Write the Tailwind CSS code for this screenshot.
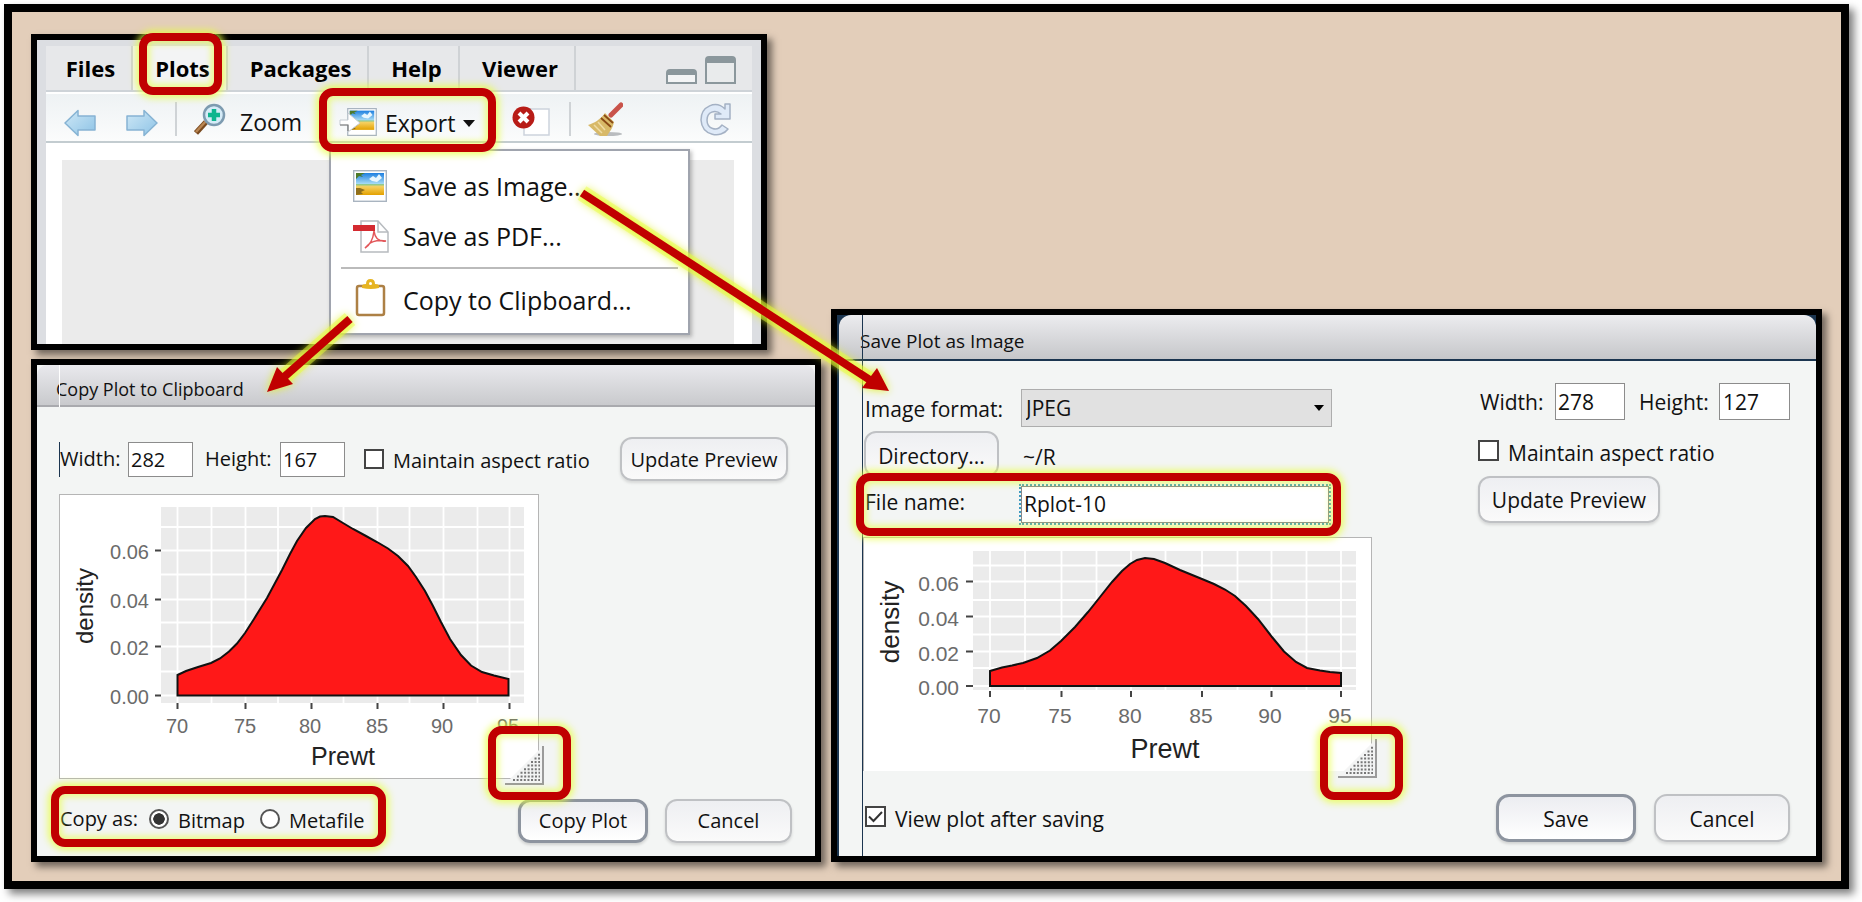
<!DOCTYPE html>
<html lang="en">
<head>
<meta charset="utf-8">
<title>Exporting plots</title>
<script src="https://cdn.jsdelivr.net/npm/@tailwindcss/browser@4"></script>
</head>
<body class="bg-white font-['Open_Sans','Noto_Sans',sans-serif] text-[20px] leading-[28px] text-[#111]">
<svg class="absolute size-0" aria-hidden="true">
  <defs>
    <linearGradient id="sky" x1="0" y1="0" x2="0" y2="1">
      <stop offset="0" stop-color="#1d7fe0"/><stop offset=".5" stop-color="#a8dcf5"/><stop offset=".52" stop-color="#8fc98f"/><stop offset=".62" stop-color="#f6d060"/><stop offset="1" stop-color="#e3a100"/>
    </linearGradient>
    <linearGradient id="blue" x1="0" y1="0" x2="1" y2="1"><stop offset="0" stop-color="#cfe8f6"/><stop offset="1" stop-color="#8dc3e6"/></linearGradient>
    <symbol id="photo" viewBox="0 0 34 32">
      <rect x=".7" y=".7" width="32.6" height="30.6" fill="#fff" stroke="#a9b4c0" stroke-width="1.4"/>
      <rect x="3" y="3" width="28" height="22" fill="url(#sky)"/>
      <path d="M3 3h9l-4 2 2 2-4-1-3 3z" fill="#4d7a2a"/>
      <path d="M16 9l4-3 3 2 3-4 3 4-5 4-5-1z" fill="#e8f6fd"/>
      <path d="M3 18l4 0 5 2-4 2 2 2-7 1z" fill="#8f6f1c"/>
    </symbol>
    <symbol id="grip" viewBox="0 0 39 39">
      <path d="M0 38L38 0v38z" fill="#f3f4f4"/>
      <path d="M0 38h38V0" fill="none" stroke="#9b9b9b" stroke-width="2"/>
      <g stroke="#777" stroke-width="2" stroke-dasharray="2 1.6">
        <path d="M8 34h27M12 30.400h23M15.500 26.800h19.500M19 23.200h16M22.500 19.600h12.500M26 16h9M29.500 12.400h5.500M33 8.800h2"/>
      </g>
    </symbol>
  </defs>
</svg>

<main class="relative mt-1 mb-[13px] ml-1 mr-[13px] flex gap-[10px] border-8 border-black bg-[#e3ceba] pt-[22px] pr-[19px] pb-[19px] pl-[19px] shadow-[5px_5px_8px_rgba(0,0,0,0.5)]">

  <div class="flex min-w-0 flex-[790_1_0px] flex-col gap-[9px]">

    <!-- Plots pane -->
    <section class="relative mr-[54px] border-6 border-black bg-[#dcdee2] pt-[6px] pr-[9px] pl-[9px] shadow-[5px_5px_7px_rgba(0,0,0,0.5)]">
      <nav class="flex h-[46px] items-stretch border-b-2 border-[#ced3d8] bg-[#e7e8ea] text-[22px] font-bold text-black">
        <button class="w-[87px] border-r-2 border-[#cfd2d5] pl-[4px]">Files</button>
        <div class="relative flex">
          <button class="w-[95px] border-r-2 border-[#cfd2d5] bg-[#f3f4f5] pl-[6px]">Plots</button>
          <span class="pointer-events-none absolute -top-[13px] left-[6px] z-20 h-[62px] w-[83px] rounded-[14px] border-8 border-[#c00000] shadow-[0_0_7px_3px_rgba(232,255,60,0.75),inset_0_0_6px_3px_rgba(232,255,60,0.6)]"></span>
        </div>
        <button class="w-[141px] border-r-2 border-[#cfd2d5] pl-[6px]">Packages</button>
        <button class="w-[91px] border-r-2 border-[#cfd2d5] pl-[6px]">Help</button>
        <button class="w-[116px] border-r-2 border-[#cfd2d5] pl-[6px]">Viewer</button>
        <div class="ml-auto flex items-end gap-2 pr-4 pb-[6px]">
          <button aria-label="Minimize"><svg class="block h-[15px] w-[31px]" viewBox="0 0 31 15"><path d="M1 14V4q0-3 3-3h23q3 0 3 3v10z" fill="#f3f4f5" stroke="#8b979c" stroke-width="2"/><path d="M1 6V4q0-3 3-3h23q3 0 3 3v2z" fill="#8b979c"/></svg></button>
          <button aria-label="Maximize"><svg class="block h-[28px] w-[31px]" viewBox="0 0 31 28"><path d="M1 27V4q0-3 3-3h23q3 0 3 3v23z" fill="#e9ebec" stroke="#8b979c" stroke-width="2"/><path d="M1 7V4q0-3 3-3h23q3 0 3 3v3z" fill="#8b979c"/></svg></button>
        </div>
      </nav>

      <div class="flex h-[51px] items-center border-t-2 border-b-2 border-t-white border-b-[#c3ccd0] bg-linear-to-b from-[#eef2f4] to-[#fbfcfc] pt-[3px] pr-[20px] pl-[18px] text-[23px]">
        <button aria-label="Previous plot"><svg class="mt-2 block h-[28px] w-[32px]" viewBox="0 0 32 28"><path d="M1 14L14 1.500V7h17v14H14v5.500z" fill="url(#blue)" stroke="#86b3d3" stroke-width="1.500" stroke-linejoin="round"/></svg></button>
        <button aria-label="Next plot" class="ml-[30px]"><svg class="mt-2 block h-[28px] w-[32px]" viewBox="0 0 32 28"><path d="M31 14L18 1.500V7H1v14h17v5.500z" fill="url(#blue)" stroke="#86b3d3" stroke-width="1.500" stroke-linejoin="round"/></svg></button>
        <span class="ml-[17px] h-[34px] w-[2px] bg-[#cfd3d6]"></span>
        <button class="ml-[17px] flex w-[112px] items-center gap-[14px]">
          <svg class="h-[32px] w-[32px] shrink-0" viewBox="0 0 32 32"><path d="M2 30L12 19" stroke="#7a4a1f" stroke-width="5.500"/><path d="M2 29L12 18" stroke="#b98652" stroke-width="2.500"/><circle cx="20" cy="12" r="10" fill="#d5ebf7" stroke="#7d9bb0" stroke-width="2.500"/><path d="M20 6v12M14 12h12" stroke="#0fb58f" stroke-width="4.500"/></svg>
          <span class="mt-[5px]">Zoom</span>
        </button>
        <div class="relative ml-[33px] w-[137px]">
          <button class="flex w-full items-center gap-[8px]">
            <svg class="mt-[5px] h-[28px] w-[38px] shrink-0" viewBox="0 0 38 28"><use href="#photo" x="8" y="0" width="30" height="28"/><path d="M1 12h8V5l12 10L9 24v-7H1z" fill="#fff" stroke="#c5ccd2" stroke-width="1"/><path d="M1 17h8v6" fill="none" stroke="#777" stroke-width="1.200"/></svg>
            <span class="mt-[7px]">Export</span>
            <svg class="mt-[9px] h-[7px] w-[12px] shrink-0" viewBox="0 0 12 7"><path d="M0 0h12L6 7z" fill="#111"/></svg>
          </button>
          <span class="pointer-events-none absolute -top-[14px] -left-[20px] z-20 h-[64px] w-[177px] rounded-[14px] border-8 border-[#c00000] shadow-[0_0_7px_3px_rgba(232,255,60,0.75),inset_0_0_6px_3px_rgba(232,255,60,0.6)]"></span>
          <div role="menu" class="absolute top-[47px] -left-[10px] z-10 flex h-[186px] w-[361px] flex-col border-2 border-[#a0a4ae] bg-white pt-[10px] pr-[10px] pl-[10px] text-[25px] leading-[36px] shadow-[2px_2px_4px_rgba(0,0,0,0.25)]">
            <button role="menuitem" class="flex h-[50px] items-center gap-[14px] pl-[12px] text-left"><svg class="h-[32px] w-[36px] shrink-0"><use href="#photo" width="34" height="32"/></svg><span>Save as Image...</span></button>
            <button role="menuitem" class="flex h-[51px] items-center gap-[14px] pl-[12px] text-left">
              <svg class="h-[33px] w-[36px] shrink-0" viewBox="0 0 36 33"><path d="M8 1h17l10 11v20H8z" fill="#fff" stroke="#b7bbbf" stroke-width="1.500"/><path d="M25 1v11h10" fill="none" stroke="#b7bbbf" stroke-width="1.500"/><path d="M12 28c5-3 8-8 9-17 1 7 5 11 12 10-7-1-14 0-18 4z" fill="none" stroke="#e2575a" stroke-width="1.500"/><rect x="0" y="5" width="22" height="6" fill="#d42a30"/></svg>
              <span>Save as PDF...</span></button>
            <hr class="mt-[5px] border-t-2 border-[#bbb]">
            <button role="menuitem" class="mt-[4px] flex h-[50px] items-center gap-[14px] pl-[12px] text-left">
              <svg class="h-[38px] w-[36px] shrink-0" viewBox="0 0 36 38"><rect x="4" y="7" width="27" height="29" rx="2" fill="#fff" stroke="#ad8045" stroke-width="2.500"/><path d="M9 9V7q0-2 4-2 0-5 4.500-5t4.500 5q4 0 4 2v2q-8 2-17 0z" fill="#e6b422"/><circle cx="17.500" cy="4.500" r="1.500" fill="#fff"/></svg>
              <span class="mt-[4px]">Copy to Clipboard...</span></button>
          </div>
        </div>
        <button aria-label="Remove plot" class="ml-[36px]"><svg class="mt-1 block h-[30px] w-[38px]" viewBox="0 0 38 30"><rect x="12" y="3" width="25" height="26" fill="#fff" stroke="#cdd3dd" stroke-width="1.500"/><circle cx="11.500" cy="11.500" r="11" fill="#b81c17"/><path d="M7 7l9 9M16 7l-9 9" stroke="#fff" stroke-width="4"/></svg></button>
        <span class="ml-[19px] h-[34px] w-[2px] bg-[#cfd3d6]"></span>
        <button aria-label="Clear all plots" class="ml-[17px]"><svg class="block h-[35px] w-[35px]" viewBox="0 0 35 35"><ellipse cx="20" cy="32" rx="14" ry="2" fill="#b9bcbf"/><path d="M33 3L23 13" stroke="#c9534a" stroke-width="5" stroke-linecap="round"/><path d="M17 11l9 9c-1 6-4 9-7 14l-7 0L0 23c6-2 12-5 17-12z" fill="#d8b968"/><path d="M6 23l8 8M10 20l7 8" stroke="#efdca4" stroke-width="1.500"/><path d="M13 16l10 9M16 13l9 8" stroke="#8a4b16" stroke-width="1.800"/></svg></button>
        <button aria-label="Refresh plot" class="ml-auto"><svg class="block h-[33px] w-[32px]" viewBox="0 0 32 33"><path d="M25 6V1h5v15H15v-5h6C15 6 7 9 7 17c0 9 10 12 15 5l6 4C21 36 2 33 1 17 1 3 16-3 25 6z" fill="#dfeaf8" stroke="#a4b1c4" stroke-width="1.500" stroke-linejoin="round"/></svg></button>
      </div>

      <div class="bg-white pt-[17px] pr-[18px] pl-[16px]"><div class="h-[184px] bg-[#ebebeb]"></div></div>
    </section>

    <!-- Copy Plot to Clipboard -->
    <section class="relative border-6 border-black bg-[#f3f5f4] shadow-[5px_5px_7px_rgba(0,0,0,0.5)]">
      <span class="absolute top-0 left-[22px] h-[42px] w-px bg-white"></span>
      <h2 class="flex h-[42px] items-center rounded-t-[10px] border-b-2 border-[#a9aaae] bg-linear-to-b from-[#e9e9ed] to-[#c9cacd] pt-[8px] pl-[19px] text-[18px]">Copy Plot to Clipboard</h2>
      <form class="pt-[30px] pr-[27px] pb-[13px] pl-[22px]">
        <div class="relative flex h-[44px] items-center">
          <span class="absolute top-[5px] left-0 h-[35px] w-px bg-[#1b3550]"></span>
          <label for="cw" class="w-[69px] shrink-0 pl-px">Width:</label>
          <input id="cw" value="282" class="h-[35px] w-[65px] border border-[#8c8c8c] bg-white pl-[2px]">
          <label for="ch" class="ml-[12px] w-[75px] shrink-0">Height:</label>
          <input id="ch" value="167" class="h-[35px] w-[65px] border border-[#8c8c8c] bg-white pl-[2px]">
          <input id="ca" type="checkbox" class="ml-[19px] size-[20px] shrink-0 appearance-none border-2 border-[#444] bg-white">
          <label for="ca" class="mt-[4px] ml-[9px] whitespace-nowrap">Maintain aspect ratio</label>
          <button type="button" class="ml-auto h-[44px] w-[168px] rounded-[12px] border-2 border-[#bfc1c4] bg-linear-to-b from-[#eeeff2] to-[#fafafa] pt-px whitespace-nowrap shadow-[0_2px_3px_rgba(0,0,0,0.12)]">Update Preview</button>
        </div>
        <div class="relative mt-[13px] h-[285px] w-[480px] border border-[#b5b5b5] bg-white">
          <svg class="block h-full w-full" viewBox="60 495 478 283" font-family="'Liberation Sans', Arial, sans-serif">
            <rect x="161" y="507" width="363" height="196" fill="#ebebeb"/>
            <path d="M161 671.500h363M161 622.500h363M161 574.500h363M161 527h363M161 695.500h363M161 646.500h363M161 599.500h363M161 550.500h363M177.500 507v196M211.500 507v196M245.500 507v196M278 507v196M311.500 507v196M343.500 507v196M377.500 507v196M409.500 507v196M443.500 507v196M477.500 507v196M509.500 507v196" stroke="#fff" stroke-width="1.800"/>
            <path d="M177.500 675L186 671L198 667L211 663L220 658.500L229 651.500L237 643.500L245 633L254 619L267 598L282 570L290 554L297 541L306 528L315 519L320 516.500L325 516L333 517L343 523L353 529L366 536L377 542L388 548.500L398 556L408 566L416 577L425 591L433 606L441 622L450 639L461 655L471 665.500L482 672L494 675.500L508.500 679V695.500H177.500Z" fill="#ff1818" stroke="#111" stroke-width="2"/>
            <path d="M155 695.500h6M155 646.500h6M155 599.500h6M155 550.500h6M177.500 703v6M245.500 703v6M311.500 703v6M377.500 703v6M443.500 703v6M509.500 703v6" stroke="#444" stroke-width="2"/>
            <g font-size="20" fill="#6b6b6b" text-anchor="end"><text x="149" y="559">0.06</text><text x="149" y="608">0.04</text><text x="149" y="655">0.02</text><text x="149" y="704">0.00</text></g>
            <g font-size="20" fill="#6b6b6b" text-anchor="middle"><text x="177" y="733">70</text><text x="245" y="733">75</text><text x="310" y="733">80</text><text x="377" y="733">85</text><text x="442" y="733">90</text><text x="508" y="733">95</text></g>
            <text x="343" y="765" font-size="25" fill="#222" text-anchor="middle">Prewt</text>
            <text transform="translate(93 606) rotate(-90)" font-size="24" fill="#222" text-anchor="middle">density</text>
          </svg>
          <svg class="absolute -right-[6px] -bottom-[7px] size-[39px]"><use href="#grip" width="39" height="39"/></svg>
          <span class="pointer-events-none absolute -right-[33px] -bottom-[22px] z-20 h-[74px] w-[83px] rounded-[14px] border-8 border-[#c00000] shadow-[0_0_7px_3px_rgba(232,255,60,0.75),inset_0_0_6px_3px_rgba(232,255,60,0.6)]"></span>
        </div>
        <div class="mt-[20px] flex h-[44px] items-center">
          <fieldset class="relative flex items-center pb-[4px]">
            <span class="float-left w-[90px] pl-px">Copy as:</span>
            <input id="rb" type="radio" name="kind" checked class="size-[20px] appearance-none rounded-full border-2 border-[#555] bg-white bg-radial from-[#333] from-55% to-white to-60% bg-origin-content p-px">
            <label for="rb" class="mt-[4px] ml-[9px] w-[82px]">Bitmap</label>
            <input id="rm" type="radio" name="kind" class="size-[20px] appearance-none rounded-full border-2 border-[#555] bg-white">
            <label for="rm" class="mt-[4px] ml-[9px] w-[76px]">Metafile</label>
            <span class="pointer-events-none absolute -top-[17px] -left-[8px] z-20 h-[61px] w-[335px] rounded-[14px] border-8 border-[#c00000] shadow-[0_0_7px_3px_rgba(232,255,60,0.75),inset_0_0_6px_3px_rgba(232,255,60,0.6)]"></span>
          </fieldset>
          <button type="button" class="ml-auto h-[44px] w-[130px] rounded-[12px] border-3 border-[#8d949f] bg-linear-to-b from-[#ecedf1] to-white shadow-[0_2px_3px_rgba(0,0,0,0.15)]">Copy Plot</button>
          <button type="button" class="mr-[-4px] ml-[17px] h-[44px] w-[127px] rounded-[12px] border-2 border-[#bfc1c4] bg-linear-to-b from-[#eeeff2] to-[#fafafa] shadow-[0_2px_3px_rgba(0,0,0,0.12)]">Cancel</button>
        </div>
      </form>
    </section>
  </div>

  <!-- Save Plot as Image -->
  <div class="flex min-w-0 flex-[991_1_0px] flex-col justify-end text-[21px]">
    <section class="relative border-6 border-black bg-[#1b3550] pl-[2px] shadow-[5px_5px_7px_rgba(0,0,0,0.5)]">
      <h2 class="relative z-0 flex h-[46px] items-center rounded-t-[12px] border-b-2 border-[#1b3550] bg-linear-to-b from-[#ececef] to-[#c6c7ca] pt-[7px] pl-[21px] text-[19px]">Save Plot as Image</h2>
      <span class="absolute top-0 bottom-0 left-[25px] w-px bg-[#1b3550]"></span>
      <form class="bg-[#f3f5f4] pr-[26px] pb-[14px] pl-[24px]">
        <div class="flex justify-between">
          <div class="relative grid grid-cols-[158px_311px] items-start pt-[28px]">
            <span class="absolute top-0 bottom-0 left-[-1px] w-px bg-[#1b3550]"></span>
            <label for="fmt" class="pt-[6px] pl-[2px] whitespace-nowrap">Image format:</label>
            <div class="relative">
              <select id="fmt" class="block h-[38px] w-full appearance-none border border-[#adadad] bg-[#e1e1e1] pl-[4px]"><option>JPEG</option></select>
              <svg class="pointer-events-none absolute top-[16px] right-[8px] h-[6px] w-[10px]" viewBox="0 0 10 6"><path d="M0 0h10L5 6z" fill="#000"/></svg>
            </div>
            <button type="button" class="mt-[4px] ml-px h-[46px] w-[135px] rounded-[12px] border-2 border-[#bfc1c4] bg-linear-to-b from-[#eeeff2] to-[#fafafa] pt-[4px]">Directory...</button>
            <span class="mt-[16px] pl-[2px]">~/R</span>
            <label for="fn" class="mt-[8px] pt-[2px] pl-[2px]">File name:</label>
            <input id="fn" value="Rplot-10" class="mt-[8px] h-[37px] w-[308px] border border-[#888] bg-white pl-[2px] outline-2 outline-dotted outline-[#3d9ac0]">
            <span class="pointer-events-none absolute top-[112px] left-[-7px] z-20 h-[63px] w-[485px] rounded-[14px] border-8 border-[#c00000] shadow-[0_0_7px_3px_rgba(232,255,60,0.75),inset_0_0_6px_3px_rgba(232,255,60,0.6)]"></span>
          </div>
          <div class="w-[312px] pt-[22px]">
            <div class="flex items-center">
              <label for="sw" class="w-[77px] shrink-0 pl-[2px]">Width:</label>
              <input id="sw" value="278" class="h-[37px] w-[70px] border border-[#8c8c8c] bg-white pl-[2px]">
              <label for="sh" class="ml-[14px] w-[80px] shrink-0">Height:</label>
              <input id="sh" value="127" class="h-[37px] w-[71px] border border-[#8c8c8c] bg-white pl-[3px]">
            </div>
            <div class="mt-[14px] flex items-center">
              <input id="sa" type="checkbox" class="size-[21px] shrink-0 appearance-none border-2 border-[#444] bg-white">
              <label for="sa" class="mt-[5px] ml-[9px] whitespace-nowrap">Maintain aspect ratio</label>
            </div>
            <button type="button" class="mt-[9px] h-[47px] w-[182px] rounded-[12px] border-2 border-[#bfc1c4] bg-linear-to-b from-[#eeeff2] to-[#fafafa] whitespace-nowrap shadow-[0_2px_3px_rgba(0,0,0,0.12)]">Update Preview</button>
          </div>
        </div>
        <div class="relative mt-[14px] h-[234px] w-[509px] border border-b-0 border-[#b5b5b5] bg-white">
          <svg class="block h-full w-full" viewBox="864 538 507 233" font-family="'Liberation Sans', Arial, sans-serif">
            <rect x="973" y="551" width="383" height="139" fill="#ebebeb"/>
            <path d="M973 565.500h383M973 600h383M973 634.500h383M973 668h383M973 581.500h383M973 616.500h383M973 651.500h383M973 686h383M990 551v139M1025 551v139M1061.500 551v139M1096.500 551v139M1131 551v139M1165.500 551v139M1202 551v139M1237.500 551v139M1271.500 551v139M1306.500 551v139M1341 551v139" stroke="#fff" stroke-width="1.800"/>
            <path d="M990 671L1002 667.500L1012 665.500L1023 663L1037 658L1050 650.500L1061 641L1075 627L1088 612L1100 597L1112 582L1122 571L1130 564L1137 560L1145 558L1154 559L1165 563L1180 570L1202 579L1214 584L1225 589.500L1235 596L1246 606L1258 619L1272 637L1284 651.500L1296 662L1307 668L1320 670.500L1330 672L1341 673V686H990Z" fill="#ff1818" stroke="#111" stroke-width="2"/>
            <path d="M966 686h7M966 651.500h7M966 616.500h7M966 581.500h7M990 691v6M1061.500 691v6M1131 691v6M1202 691v6M1271.500 691v6M1341 691v6" stroke="#444" stroke-width="2"/>
            <g font-size="21" fill="#6b6b6b" text-anchor="end"><text x="959" y="591">0.06</text><text x="959" y="626">0.04</text><text x="959" y="661">0.02</text><text x="959" y="695">0.00</text></g>
            <g font-size="21" fill="#6b6b6b" text-anchor="middle"><text x="989" y="723">70</text><text x="1060" y="723">75</text><text x="1130" y="723">80</text><text x="1201" y="723">85</text><text x="1270" y="723">90</text><text x="1340" y="723">95</text></g>
            <text x="1165" y="758" font-size="27" fill="#222" text-anchor="middle">Prewt</text>
            <text transform="translate(899 622) rotate(-90)" font-size="26" fill="#222" text-anchor="middle">density</text>
          </svg>
          <svg class="absolute -right-[6px] -bottom-[7px] size-[39px]"><use href="#grip" width="39" height="39"/></svg>
          <span class="pointer-events-none absolute -right-[32px] -bottom-[29px] z-20 h-[74px] w-[83px] rounded-[14px] border-8 border-[#c00000] shadow-[0_0_7px_3px_rgba(232,255,60,0.75),inset_0_0_6px_3px_rgba(232,255,60,0.6)]"></span>
        </div>
        <div class="relative mt-[23px] flex h-[48px] items-center">
          <span class="absolute top-[-23px] bottom-[-14px] left-[-1px] w-px bg-[#1b3550]"></span>
          <span class="relative mb-[4px] ml-[2px] size-[21px] shrink-0">
            <input id="vp" type="checkbox" checked class="block size-[21px] appearance-none border-2 border-[#444] bg-white">
            <svg class="pointer-events-none absolute inset-0" viewBox="0 0 21 21"><path d="M4 10.500l4.500 4.500L17 6" fill="none" stroke="#333" stroke-width="2"/></svg>
          </span>
          <label for="vp" class="mt-px ml-[9px]">View plot after saving</label>
          <button type="button" class="ml-auto h-[48px] w-[140px] rounded-[13px] border-3 border-[#8d949f] bg-linear-to-b from-[#ecedf1] to-white pt-px shadow-[0_2px_3px_rgba(0,0,0,0.15)]">Save</button>
          <button type="button" class="ml-[18px] h-[48px] w-[136px] rounded-[13px] border-2 border-[#bfc1c4] bg-linear-to-b from-[#eeeff2] to-[#fafafa] pt-px shadow-[0_2px_3px_rgba(0,0,0,0.12)]">Cancel</button>
        </div>
      </form>
    </section>
  </div>

  <!-- Arrows from the menu items to their dialogs -->
  <svg class="pointer-events-none absolute top-0 left-0 z-30 h-[400px] w-[900px] drop-shadow-[0_0_4px_#e0f020]" viewBox="12 12 900 400">
    <g fill="none" stroke="rgba(232,255,60,0.45)" stroke-width="16"><path d="M582 193L870 380M350 319L286 375"/></g>
    <path d="M582 193L870 380" stroke="#c00000" stroke-width="8"/>
    <path d="M889 391L862 388L877 368Z" fill="#c00000"/>
    <path d="M350 319L284 377" stroke="#c00000" stroke-width="8"/>
    <path d="M267 392L277 367L293 384Z" fill="#c00000"/>
  </svg>
</main>
</body>
</html>
